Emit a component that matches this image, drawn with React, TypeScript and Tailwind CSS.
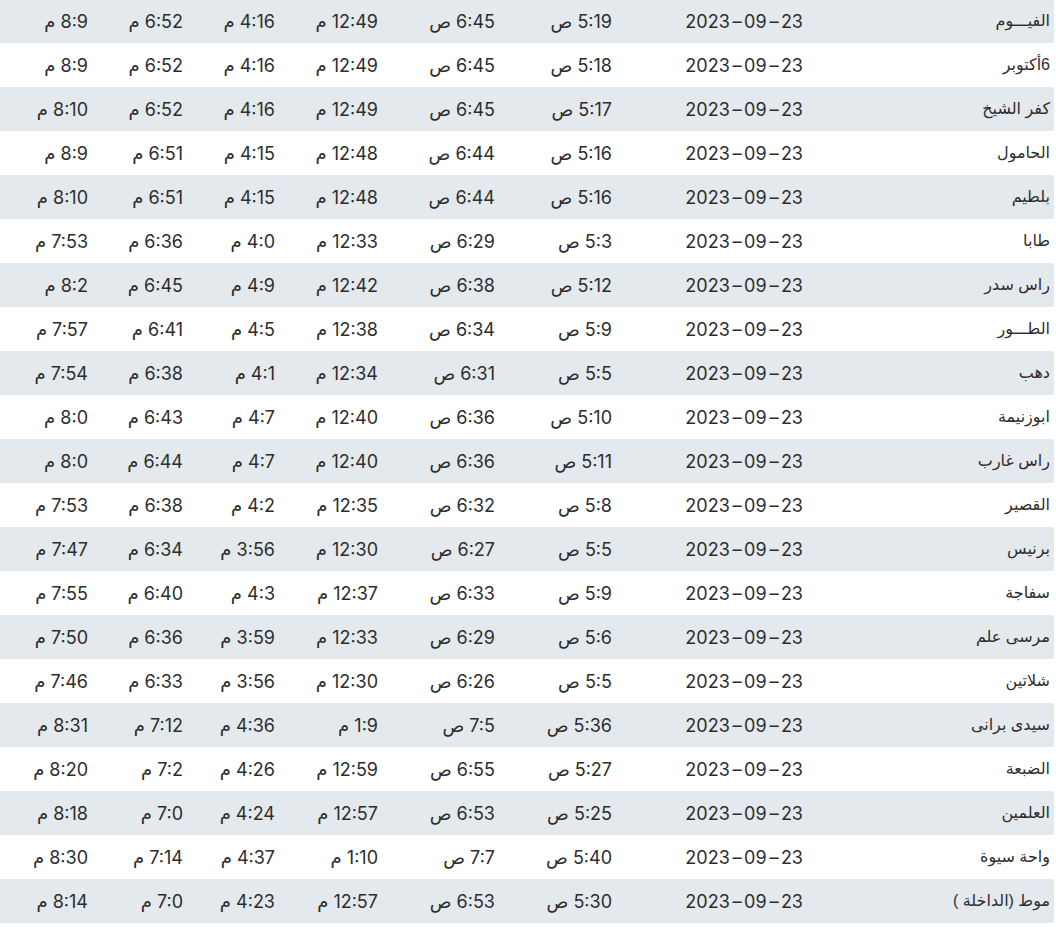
const rows: string[][] = [
  ["الفيـــوم", "5:19 ص", "6:45 ص", "12:49 م", "4:16 م", "6:52 م", "8:9 م"],
  ["6أكتوبر", "5:18 ص", "6:45 ص", "12:49 م", "4:16 م", "6:52 م", "8:9 م"],
  ["كفر الشيخ", "5:17 ص", "6:45 ص", "12:49 م", "4:16 م", "6:52 م", "8:10 م"],
  ["الحامول", "5:16 ص", "6:44 ص", "12:48 م", "4:15 م", "6:51 م", "8:9 م"],
  ["بلطيم", "5:16 ص", "6:44 ص", "12:48 م", "4:15 م", "6:51 م", "8:10 م"],
  ["طابا", "5:3 ص", "6:29 ص", "12:33 م", "4:0 م", "6:36 م", "7:53 م"],
  ["راس سدر", "5:12 ص", "6:38 ص", "12:42 م", "4:9 م", "6:45 م", "8:2 م"],
  ["الطـــور", "5:9 ص", "6:34 ص", "12:38 م", "4:5 م", "6:41 م", "7:57 م"],
  ["دهب", "5:5 ص", "6:31 ص", "12:34 م", "4:1 م", "6:38 م", "7:54 م"],
  ["ابوزنيمة", "5:10 ص", "6:36 ص", "12:40 م", "4:7 م", "6:43 م", "8:0 م"],
  ["راس غارب", "5:11 ص", "6:36 ص", "12:40 م", "4:7 م", "6:44 م", "8:0 م"],
  ["القصير", "5:8 ص", "6:32 ص", "12:35 م", "4:2 م", "6:38 م", "7:53 م"],
  ["برنيس", "5:5 ص", "6:27 ص", "12:30 م", "3:56 م", "6:34 م", "7:47 م"],
  ["سفاجة", "5:9 ص", "6:33 ص", "12:37 م", "4:3 م", "6:40 م", "7:55 م"],
  ["مرسى علم", "5:6 ص", "6:29 ص", "12:33 م", "3:59 م", "6:36 م", "7:50 م"],
  ["شلاتين", "5:5 ص", "6:26 ص", "12:30 م", "3:56 م", "6:33 م", "7:46 م"],
  ["سيدى برانى", "5:36 ص", "7:5 ص", "1:9 م", "4:36 م", "7:12 م", "8:31 م"],
  ["الضبعة", "5:27 ص", "6:55 ص", "12:59 م", "4:26 م", "7:2 م", "8:20 م"],
  ["العلمين", "5:25 ص", "6:53 ص", "12:57 م", "4:24 م", "7:0 م", "8:18 م"],
  ["واحة سيوة", "5:40 ص", "7:7 ص", "1:10 م", "4:37 م", "7:14 م", "8:30 م"],
  ["موط (الداخلة )", "5:30 ص", "6:53 ص", "12:57 م", "4:23 م", "7:0 م", "8:14 م"],
];

// widths of the time columns, right to left
const timeCols = ["w-[117px]", "w-[117px]", "w-[103px]", "w-[92px]", "w-[95px]", "w-[92px]"];

// the date font in the picture has a long dash, so stretch the hyphen a bit
const Dash = () => <span className="mx-[3px] inline-block scale-x-[1.6]">-</span>;

export default function App() {
  return (
    <div className="w-[1056px] bg-white">
      <table dir="rtl" className="mt-[-1px] w-[1054px] table-fixed border-collapse text-[#2d2d2d]">
        <colgroup>
          <col className="w-[247px]" />
          <col className="w-[191px]" />
          {timeCols.map((w, i) => (
            <col key={i} className={w} />
          ))}
        </colgroup>
        <tbody>
          {rows.map((r, i) => (
            <tr key={i} className={`h-[44px] ${i % 2 === 0 ? "bg-[#e3e9ec]" : "bg-white"}`}>
              <td className="pr-1 text-right text-[16px] font-['Liberation_Sans','DejaVu_Sans',sans-serif] whitespace-nowrap">
                {r[0]}
              </td>
              <td className="pr-1 text-right text-[18px] font-['Inter',sans-serif] whitespace-nowrap">
                <span dir="ltr">
                  2023<Dash />09<Dash />23
                </span>
              </td>
              {r.slice(1).map((t, j) => (
                <td key={j} className="pr-1 text-right text-[18px] font-['Inter','DejaVu_Sans',sans-serif] whitespace-nowrap">
                  {t}
                </td>
              ))}
            </tr>
          ))}
        </tbody>
      </table>
    </div>
  );
}
